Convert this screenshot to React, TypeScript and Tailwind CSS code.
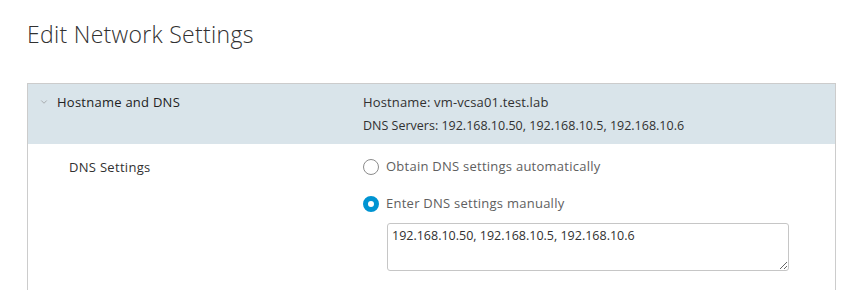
import { ChevronDown } from 'lucide-react';

const font = '"Open Sans", "Noto Sans", sans-serif';

export default function App() {
  return (
    <div className="w-[841px] h-[290px] overflow-hidden bg-white" style={{ fontFamily: font }}>
      <div className="pl-[27px] pr-[5px]">
        {/* Title */}
        <h1 className="pt-[20px] h-[83px] text-[23px] font-light leading-[28px] tracking-[0.3px] text-[#313131]">
          Edit Network Settings
        </h1>

        {/* Panel */}
        <div className="border border-[#cccccc] border-b-0 h-[210px]">
          {/* Header */}
          <div className="flex bg-[#d9e4ea] h-[60px] pt-[9px]">
            <div className="w-[335px] flex items-start">
              <div className="w-[29px] h-[18px] flex items-center justify-end pr-[8px]">
                <ChevronDown className="w-[10px] h-[10px] text-[#8a8a8a]" strokeWidth={1.5} />
              </div>
              <span className="text-[13px] font-medium leading-[18px] tracking-[0.25px] text-[#222222]">
                Hostname and DNS
              </span>
            </div>
            <div className="flex flex-col gap-[6px] text-[12.5px] leading-[18px] text-[#313131]">
              <span className="text-[13px] tracking-[0.15px]">Hostname: vm-vcsa01.test.lab</span>
              <span>DNS Servers: 192.168.10.50, 192.168.10.5, 192.168.10.6</span>
            </div>
          </div>

          {/* Body */}
          <div className="flex pt-[14px]">
            <div className="w-[335px] pl-[41px] text-[13px] leading-[18px] tracking-[0.3px] text-[#313131]">
              DNS Settings
            </div>
            <div className="flex flex-col">
              <label className="flex items-center gap-[7px] h-[18px] text-[13px] tracking-[0.25px] text-[#606060]">
                <span className="w-[16px] h-[16px] rounded-full border border-[#8c8c8c] bg-white" />
                Obtain DNS settings automatically
              </label>
              <label className="flex items-center gap-[7px] h-[18px] mt-[19px] text-[13px] tracking-[0.25px] text-[#606060]">
                <span className="w-[16px] h-[16px] rounded-full border-[5px] border-[#0094d2] bg-white" />
                Enter DNS settings manually
              </label>
              <textarea
                className="mt-[10px] ml-[24px] w-[402px] h-[48px] border border-[#c6c6c6] rounded-[3px] px-[4px] py-[3px] text-[12.5px] leading-[18px] text-[#313131] outline-none"
                defaultValue="192.168.10.50, 192.168.10.5, 192.168.10.6"
                style={{ fontFamily: font }}
              />
            </div>
          </div>
        </div>
      </div>
    </div>
  );
}
